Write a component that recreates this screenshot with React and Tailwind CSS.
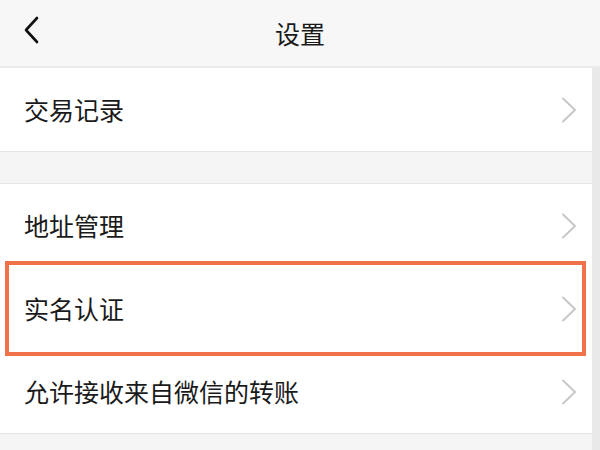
import React from 'react';

const font = { fontFamily: '"Noto Sans CJK SC", "Noto Sans", sans-serif' };

function Chevron() {
  return (
    <svg width="16" height="26" viewBox="0 0 16 26" fill="none" className="shrink-0">
      <path d="M2 1.5 L14 13 L2 24.5" stroke="#c8c8c8" strokeWidth="2" strokeLinecap="round" strokeLinejoin="round" />
    </svg>
  );
}

function Row({ label, highlight }) {
  return (
    <div className="relative flex h-[83px] items-center justify-between bg-white pl-[24px] pr-[15px]">
      <span className="text-[25px] leading-none text-[#1a1a1a]">{label}</span>
      <Chevron />
      {highlight && (
        <div className="pointer-events-none absolute left-[5px] right-[6px] top-[-6px] bottom-[-6px] z-10 border-[4px] border-[#f0714a]" />
      )}
    </div>
  );
}

export default function App() {
  return (
    <div className="flex h-[450px] w-[600px] flex-col overflow-hidden bg-[#f5f5f5]" style={font}>
      <header className="relative flex h-[68px] shrink-0 items-center justify-center border-b-2 border-[#ebebeb] bg-[#f7f7f7]">
        <svg width="16" height="28" viewBox="0 0 16 28" fill="none" className="absolute left-[23px] top-[16px]">
          <path d="M14 2 L3 14 L14 26" stroke="#111" strokeWidth="2.6" strokeLinecap="round" strokeLinejoin="round" />
        </svg>
        <span className="text-[25px] leading-none text-[#1a1a1a]">设置</span>
      </header>

      <div className="flex flex-1">
        <div className="flex-1">
          <div className="border-b border-[#e6e6e6]">
            <Row label="交易记录" />
          </div>
          <div className="h-[31px]" />
          <div className="border-y border-[#e6e6e6]">
            <Row label="地址管理" />
            <Row label="实名认证" highlight />
            <Row label="允许接收来自微信的转账" />
          </div>
        </div>
        <div className="w-[8px] bg-[#e9e9e9]" />
      </div>
    </div>
  );
}
